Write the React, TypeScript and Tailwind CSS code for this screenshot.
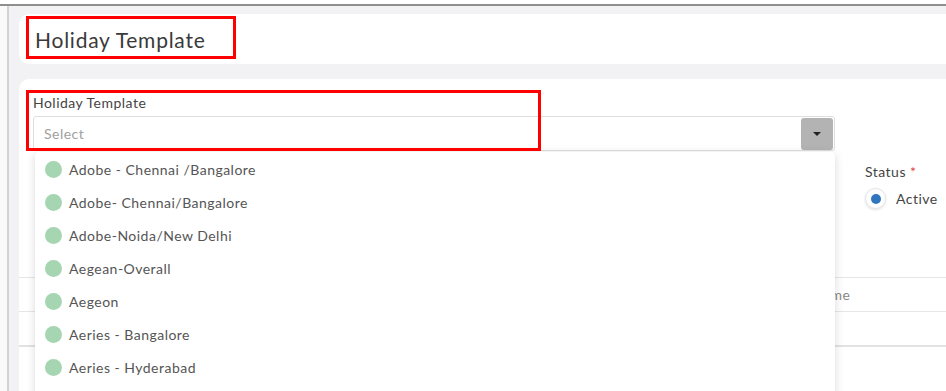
import { useState } from "react";

// data: dropdown options //
const templates = [
    "Adobe - Chennai /Bangalore",
    "Adobe- Chennai/Bangalore",
    "Adobe-Noida/New Delhi",
    "Aegean-Overall",
    "Aegeon",
    "Aeries - Bangalore",
    "Aeries - Hyderabad",
];

const App = () => {
    const [selected, setSelected] = useState("");

    return (
        <div className="relative w-[946px] h-[391px] overflow-hidden bg-white font-['Lato',sans-serif] tracking-[0.03em] text-[#444]">
            <div className="h-[4px] bg-white" />
            <div className="h-[2px] bg-[#8f8f8f]" />

            <div className="flex h-full">
                <div className="w-[7px] bg-[#fafafa]" />
                <div className="w-[2px] bg-[#d2d2d2]" />

                {/* content area */}
                <div className="flex-1 bg-[#f2f2f4] pl-[10px] pt-[8px]">
                    <div className="h-[50px] bg-white rounded-l-[10px] flex items-center pl-[16px]">
                        <h1 className="text-[21px] tracking-[0.036em] text-[#3a3a3a] leading-none">Holiday Template</h1>
                    </div>

                    <div className="relative mt-[15px] h-[320px] bg-white rounded-tl-[10px] pl-[14px] pt-[15px]">
                        <div className="flex">
                            <div className="w-[802px]">
                                <label className="block text-[14px] leading-[18px] text-[#444] mb-[4px]">Holiday Template</label>
                                <div className="h-[35px] border border-[#dedede] rounded-[3px] flex items-center justify-between pl-[10px] pr-[1px]">
                                    <span className="text-[14px] text-[#a0a0a0]">{selected || "Select"}</span>
                                    <button className="w-[32px] h-[32px] rounded-[3px] bg-[#b3b3b3] flex items-center justify-center">
                                        <span className="w-0 h-0 border-l-[4px] border-r-[4px] border-t-[4px] border-l-transparent border-r-transparent border-t-[#222]" />
                                    </button>
                                </div>
                            </div>

                            <div className="ml-[30px] pt-[67px]">
                                <div className="text-[14px] text-[#444]">
                                    Status <span className="text-[#e04040]">*</span>
                                </div>
                                <div className="flex items-center mt-[6px]">
                                    <span className="w-[21px] h-[21px] rounded-full border border-[#e2e2e2] shadow-sm flex items-center justify-center">
                                        <span className="w-[10px] h-[10px] rounded-full bg-[#2f76bf]" />
                                    </span>
                                    <span className="ml-[10px] text-[14px] text-[#444]">Active</span>
                                </div>
                            </div>
                        </div>

                        {/* table header behind dropdown */}
                        <div className="mt-[68px] -ml-[14px] border-t border-[#e6e6e6]">
                            <div className="h-[34px] flex items-center pl-[739px] text-[14px] text-[#888] border-b border-[#e6e6e6]">
                                Holiday Name
                            </div>
                            <div className="h-[35px] border-b-2 border-[#e2e2e2]" />
                        </div>

                        {/* dropdown */}
                        <ul className="absolute left-[16px] top-[73px] w-[800px] h-[260px] bg-white rounded-[4px] shadow-[0_2px_10px_rgba(0,0,0,0.15)] pt-[1px]">
                            {templates.map((t) => (
                                <li
                                    key={t}
                                    onClick={() => setSelected(t)}
                                    className="h-[33px] flex items-center pl-[10px] cursor-pointer"
                                >
                                    <span className="w-[17px] h-[17px] rounded-full bg-[#a6d5b1]" />
                                    <span className="ml-[7px] text-[14px] text-[#555]">{t}</span>
                                </li>
                            ))}
                        </ul>
                    </div>
                </div>
            </div>

            {/* annotation boxes */}
            <div className="absolute left-[26px] top-[16px] w-[210px] h-[43px] border-[3px] border-[#ff0000]" />
            <div className="absolute left-[26px] top-[90px] w-[515px] h-[61px] border-[3px] border-[#ff0000]" />
        </div>
    );
};

export default App;
